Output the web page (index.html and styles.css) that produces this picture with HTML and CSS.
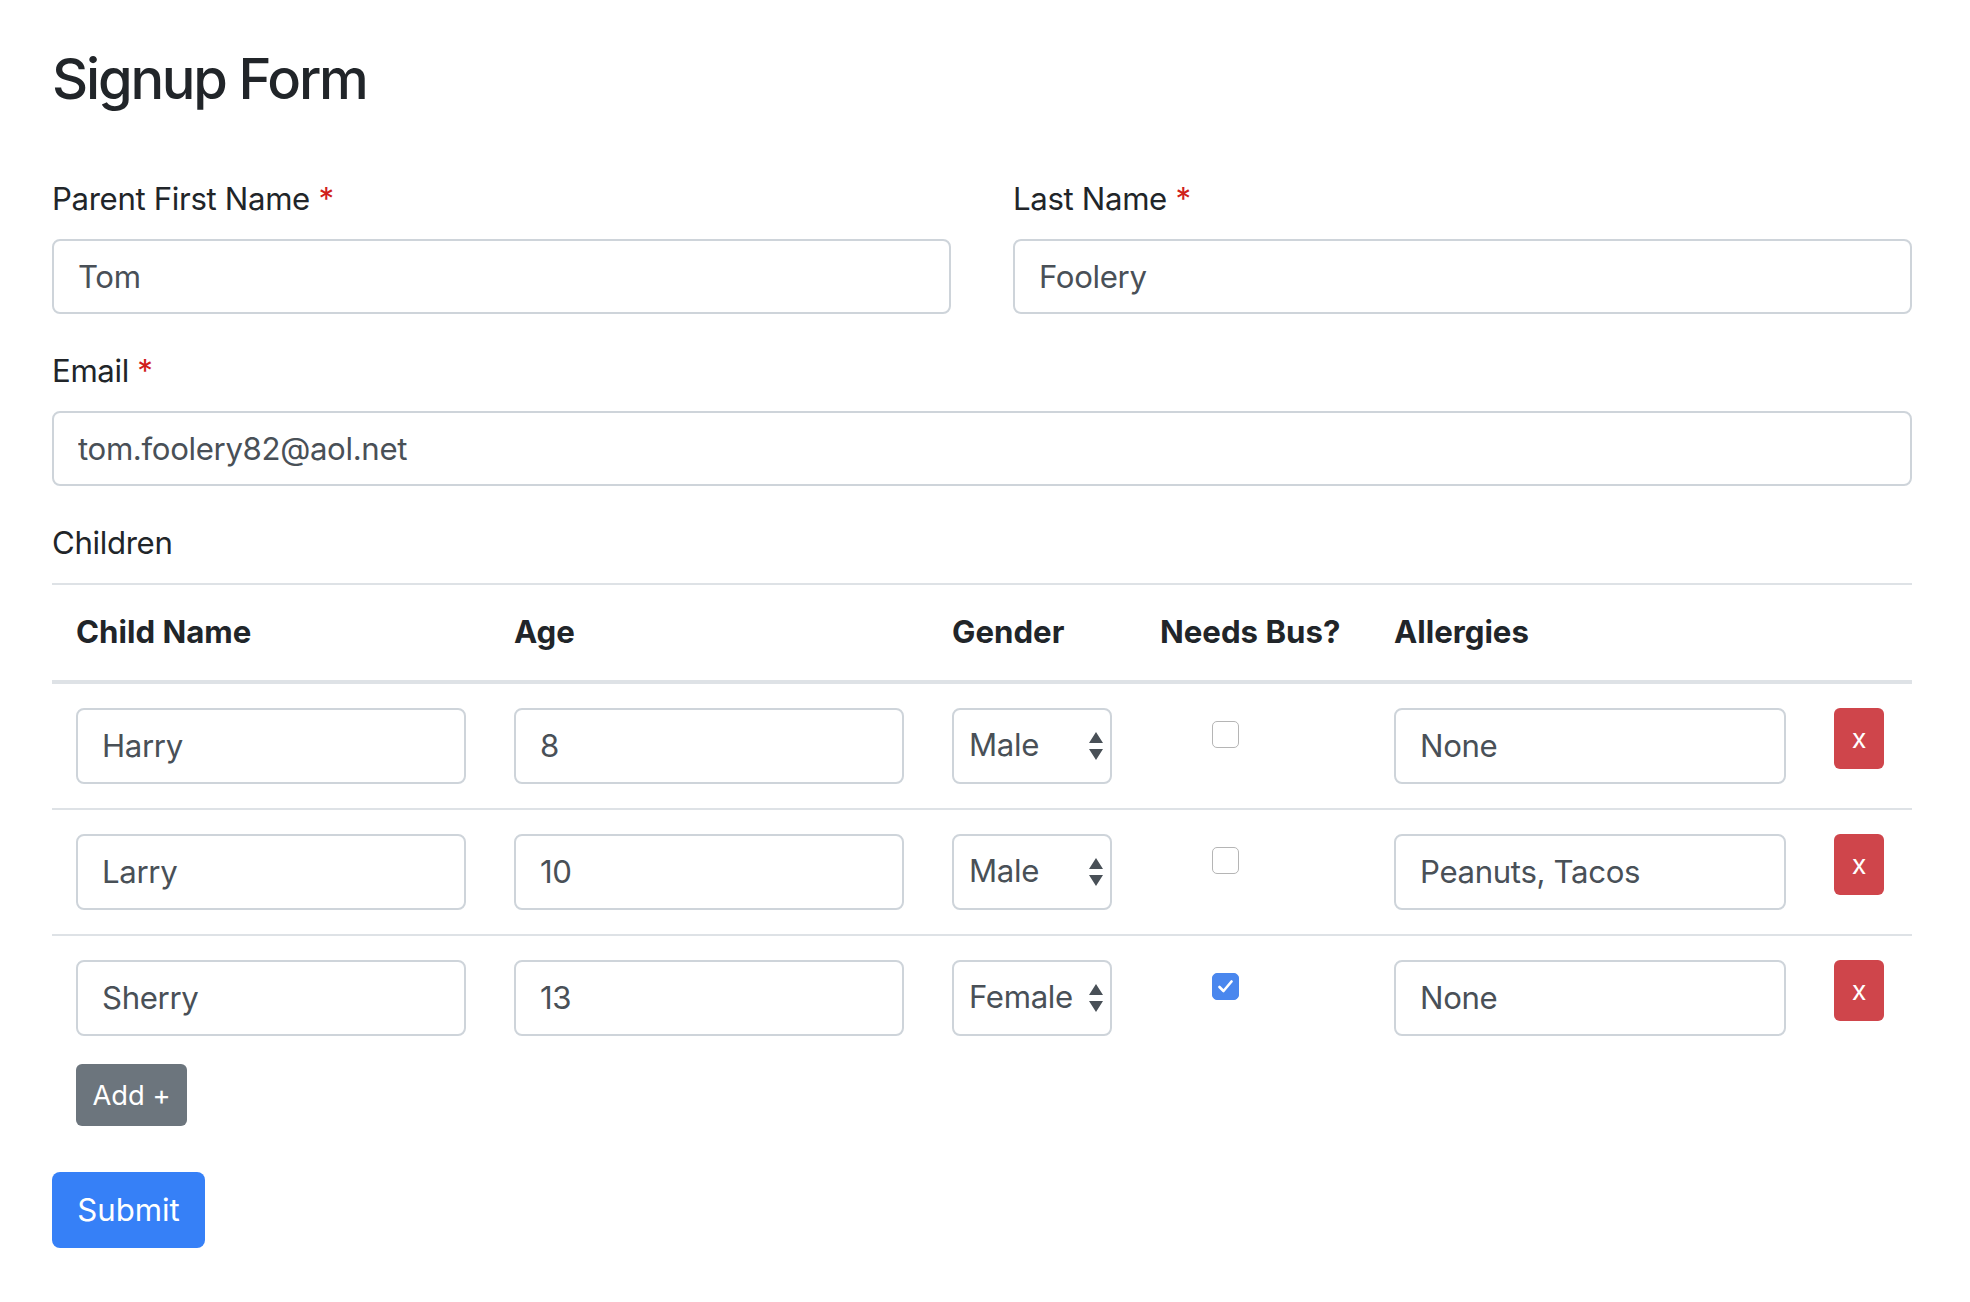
FILE: index.html
```html
<!DOCTYPE html>
<html lang="en">
<head>
<meta charset="utf-8">
<title>Signup Form</title>
<link rel="stylesheet" href="styles.css">
</head>
<body>
<div class="container">
  <h2 class="title">Signup Form</h2>
  <form class="signup">
    <div class="row">
      <div class="form-group col">
        <label class="label">Parent First Name <span class="req">*</span></label>
        <input class="form-control" type="text" value="Tom">
      </div>
      <div class="form-group col">
        <label class="label">Last Name <span class="req">*</span></label>
        <input class="form-control" type="text" value="Foolery">
      </div>
    </div>
    <div class="form-group">
      <label class="label">Email <span class="req">*</span></label>
      <input class="form-control" type="email" value="tom.foolery82@aol.net">
    </div>
    <div class="children">
      <label class="label">Children</label>
      <table class="table">
        <colgroup>
          <col class="c-name"><col class="c-age"><col class="c-gender"><col class="c-bus"><col class="c-all"><col class="c-del">
        </colgroup>
        <thead>
          <tr><th>Child Name</th><th>Age</th><th>Gender</th><th>Needs Bus?</th><th>Allergies</th><th></th></tr>
        </thead>
        <tbody>
          <tr>
            <td><input class="form-control" type="text" value="Harry"></td>
            <td><input class="form-control" type="text" value="8"></td>
            <td><div class="select"><span class="select-value">Male</span><svg class="arrows" width="14" height="28" viewBox="0 0 14 28"><path d="M7 0 L14 11 L0 11 Z M0 17 L14 17 L7 28 Z" fill="#495057"/></svg></div></td>
            <td><span class="check"></span></td>
            <td><input class="form-control" type="text" value="None"></td>
            <td><button type="button" class="btn btn-del">x</button></td>
          </tr>
          <tr>
            <td><input class="form-control" type="text" value="Larry"></td>
            <td><input class="form-control" type="text" value="10"></td>
            <td><div class="select"><span class="select-value">Male</span><svg class="arrows" width="14" height="28" viewBox="0 0 14 28"><path d="M7 0 L14 11 L0 11 Z M0 17 L14 17 L7 28 Z" fill="#495057"/></svg></div></td>
            <td><span class="check"></span></td>
            <td><input class="form-control" type="text" value="Peanuts, Tacos"></td>
            <td><button type="button" class="btn btn-del">x</button></td>
          </tr>
          <tr>
            <td><input class="form-control" type="text" value="Sherry"></td>
            <td><input class="form-control" type="text" value="13"></td>
            <td><div class="select"><span class="select-value">Female</span><svg class="arrows" width="14" height="28" viewBox="0 0 14 28"><path d="M7 0 L14 11 L0 11 Z M0 17 L14 17 L7 28 Z" fill="#495057"/></svg></div></td>
            <td><span class="check checked"><svg width="15" height="13" viewBox="0 0 15 13"><path d="M1.5 7 L5.5 11 L13.5 1.5" fill="none" stroke="#fff" stroke-width="2.6" stroke-linecap="round" stroke-linejoin="round"/></svg></span></td>
            <td><input class="form-control" type="text" value="None"></td>
            <td><button type="button" class="btn btn-del">x</button></td>
          </tr>
        </tbody>
      </table>
      <div class="add-row"><button type="button" class="btn btn-add">Add +</button></div>
    </div>
    <button type="submit" class="btn btn-submit">Submit</button>
  </form>
</div>
</body>
</html>
```
FILE: styles.css
```css
* { box-sizing: border-box; }
html, body { margin: 0; padding: 0; background: #fff; }
body {
  font-family: Inter, "Noto Sans", "Liberation Sans", sans-serif;
  font-size: 31.2px;
  line-height: 47px;
  color: #212529;
  letter-spacing: -0.35px;
}
.container {
  width: 1970px;
  padding: 44px 58px 0 52px;
}
.title {
  margin: 0;
  font-size: 56px;
  line-height: 70px;
  font-weight: 500;
  letter-spacing: -2.2px;
  color: #212529;
}
.signup { margin-top: 62px; }
.row {
  display: flex;
  gap: 62px;
}
.col { flex: 1 1 0; min-width: 0; }
.form-group { margin-bottom: 34px; }
.label {
  display: block;
  margin-bottom: 16px;
  line-height: 47px;
  font-size: 31.2px;
}
.req { color: #d0201b; }
.form-control {
  display: block;
  width: 100%;
  height: 75px;
  padding: 0 24px;
  border: 2px solid #ced4da;
  border-radius: 8px;
  font-family: inherit;
  font-size: 31.2px;
  letter-spacing: -0.35px;
  color: #495057;
  background: #fff;
  outline: none;
}
.table {
  width: 1860px;
  border-collapse: collapse;
  table-layout: fixed;
  margin: 0;
}
.c-name { width: 438px; }
.c-age { width: 438px; }
.c-gender { width: 208px; }
.c-bus { width: 234px; }
.c-all { width: 440px; }
.c-del { width: 102px; }
.table th {
  text-align: left;
  font-weight: 700;
  letter-spacing: 0;
  padding: 24px;
  line-height: 47px;
  border-top: 2px solid #dee2e6;
  border-bottom: 4px solid #dee2e6;
  white-space: nowrap;
}
.table td {
  padding: 24px;
  border-top: 2px solid #dee2e6;
  vertical-align: top;
}
.table td .form-control { height: 76px; }
.select {
  position: relative;
  height: 76px;
  border: 2px solid #ced4da;
  border-radius: 8px;
  padding: 0 15px;
  display: flex;
  align-items: center;
  color: #495057;
}
.select-value { line-height: 1; }
.arrows {
  position: absolute;
  right: 7px;
  top: 22px;
}
.check {
  display: flex;
  align-items: center;
  justify-content: center;
  width: 27px;
  height: 27px;
  margin: 13px 0 0 52px;
  border: 1.5px solid #b5b5b5;
  border-radius: 5px;
  background: #fff;
}
.check.checked {
  background: #4a87ee;
  border-color: #4a87ee;
}
.btn {
  display: inline-flex;
  align-items: center;
  justify-content: center;
  border: 0;
  font-family: inherit;
  letter-spacing: 0;
  color: #fff;
  cursor: pointer;
}
.btn-del {
  width: 50px;
  height: 61px;
  border-radius: 6px;
  background: #cf454b;
  font-size: 27px;
  padding: 0;
}
.add-row { padding: 4px 0 0 24px; }
.btn-add {
  width: 111px;
  height: 62px;
  border-radius: 6px;
  background: #6c757d;
  font-size: 27.3px;
  padding: 0;
}
.btn-submit {
  margin-top: 46px;
  width: 153px;
  height: 76px;
  border-radius: 8px;
  background: #3680f7;
  font-size: 31.2px;
  padding: 0;
}
```
